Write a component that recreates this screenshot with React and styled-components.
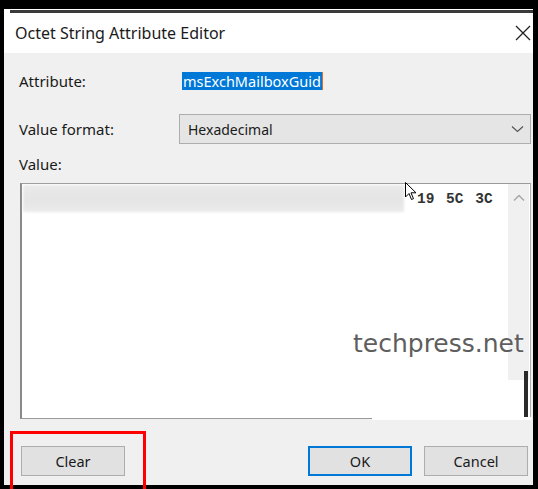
import React from "react";
import styled, { createGlobalStyle } from "styled-components";

const Global = createGlobalStyle`
  html, body {
    margin: 0;
    padding: 0;
    background: #000;
  }
  body {
    width: 538px;
    height: 489px;
    overflow: hidden;
    font-family: "Noto Sans", "Open Sans", sans-serif;
  }
`;

const Dialog = styled.div`
  position: relative;
  margin: 9px 0 0 4px;
  width: 529px;
  height: 476px;
  background: #f0f0f0;
  display: flex;
  flex-direction: column;
`;

const TitleBar = styled.div`
  background: #fff;
  height: 44px;
  display: flex;
  flex-direction: column;
`;

const TopRule = styled.div`
  margin: 1px 0 0 6px;
  height: 3px;
  background: #3a3a3a;
`;

const TitleRow = styled.div`
  flex: 1;
  display: flex;
  align-items: center;
  justify-content: space-between;
  padding: 0 2px 1px 11px;
`;

const Title = styled.span`
  font-size: 16px;
  color: #1a1a1a;
`;

const Body = styled.div`
  flex: 1;
  padding: 18px 2px 0 15px;
  display: flex;
  flex-direction: column;
`;

const Row = styled.div`
  display: grid;
  grid-template-columns: 160px 1fr;
  align-items: center;
  height: ${(p) => p.h}px;
  margin-top: ${(p) => p.mt || 0}px;
`;

const Label = styled.span`
  font-size: 15px;
  color: #1a1a1a;
`;

const Selected = styled.span`
  justify-self: start;
  margin-left: 3px;
  background: #0078d7;
  color: #fff;
  font-size: 14.5px;
  padding: 0 1px 0 1px;
  line-height: 18px;
  border-right: 1px solid #e07020;
`;

const Combo = styled.div`
  height: 30px;
  box-sizing: border-box;
  border: 1px solid #adadad;
  background: #e5e5e5;
  display: flex;
  align-items: center;
  justify-content: space-between;
  padding: 0 6px 0 8px;
  font-size: 14px;
  color: #1a1a1a;
`;

const ValueLabel = styled(Label)`
  margin-top: 11px;
  line-height: 18px;
`;

const TextBox = styled.div`
  position: relative;
  margin: 10px 0 0 1px;
  height: 236px;
  box-sizing: border-box;
  border: 1px solid #9a9a9a;
  border-left: 2px solid #8a8a8a;
  border-right-color: #b0b0b0;
  background: #fff;
  display: grid;
  grid-template-columns: 1fr 21px;
  padding-right: 1px;
`;

const Lines = styled.div`
  display: flex;
  align-items: flex-start;
  padding: 1px 0 0 1px;
`;

const Blurred = styled.div`
  width: 381px;
  height: 27px;
  background: linear-gradient(180deg, #e9e9e9 0%, #e4e4e4 55%, #eaeaea 100%);
  filter: blur(0.8px);
  opacity: 0.95;
`;

const Hex = styled.span`
  margin: 6px 0 0 13px;
  font-family: "Liberation Mono", monospace;
  font-weight: bold;
  font-size: 14.5px;
  color: #333;
  word-spacing: 3px;
`;

const Scroll = styled.div`
  display: flex;
  flex-direction: column;
  align-items: center;
  background: #f0f0f0;
  padding-top: 10px;
  height: 186px;
`;

const ScrollThumb = styled.div`
  position: absolute;
  right: 2px;
  top: 187px;
  width: 4px;
  height: 47px;
  background: #2a2a2a;
`;

const BottomCover = styled.div`
  position: absolute;
  left: 350px;
  right: -2px;
  bottom: -2px;
  height: 3px;
  background: #fff;
`;

const Buttons = styled.div`
  display: flex;
  align-items: center;
  margin-top: 27px;
  padding: 0 3px 0 2px;
  gap: 12px;
`;

const Spacer = styled.div`
  flex: 1;
`;

const Button = styled.button`
  width: ${(p) => p.w}px;
  height: 30px;
  box-sizing: border-box;
  background: #e1e1e1;
  border: ${(p) => (p.primary ? "2px solid #0078d7" : "1px solid #adadad")};
  font-family: "Noto Sans", "Open Sans", sans-serif;
  font-size: 14.5px;
  color: #1a1a1a;
  padding: 0;
`;

const Highlight = styled.div`
  position: absolute;
  left: 6px;
  top: 422px;
  width: 136px;
  height: 80px;
  box-sizing: border-box;
  border: 3px solid #f00;
`;

const Watermark = styled.div`
  position: absolute;
  left: 349px;
  top: 320px;
  font-family: "DejaVu Sans", sans-serif;
  font-size: 25px;
  color: #5e5e5e;
  text-shadow: 0 0 2px #fff;
`;

const Cursor = styled.svg`
  position: absolute;
  left: 401px;
  top: 173px;
`;

export default function App() {
  return (
    <>
      <Global />
      <Dialog>
        <TitleBar>
          <TopRule />
          <TitleRow>
            <Title>Octet String Attribute Editor</Title>
            <svg width="16" height="16" viewBox="0 0 16 16">
              <path d="M1 1 L15 15 M15 1 L1 15" stroke="#222" strokeWidth="1.3" />
            </svg>
          </TitleRow>
        </TitleBar>
        <Body>
          <Row h={18}>
            <Label>Attribute:</Label>
            <Selected>msExchMailboxGuid</Selected>
          </Row>
          <Row h={30} mt={25}>
            <Label>Value format:</Label>
            <Combo>
              <span>Hexadecimal</span>
              <svg width="13" height="8" viewBox="0 0 13 8">
                <path d="M1 1.5 L6.5 6.5 L12 1.5" fill="none" stroke="#555" strokeWidth="1.2" />
              </svg>
            </Combo>
          </Row>
          <ValueLabel>Value:</ValueLabel>
          <TextBox>
            <Lines>
              <Blurred />
              <Hex>19 5C 3C</Hex>
            </Lines>
            <Scroll>
              <svg width="12" height="8" viewBox="0 0 12 8">
                <path d="M1 6.5 L6 1.5 L11 6.5" fill="none" stroke="#a8a8a8" strokeWidth="1.5" />
              </svg>
            </Scroll>
            <ScrollThumb />
            <BottomCover />
          </TextBox>
          <Buttons>
            <Button w={104}>Clear</Button>
            <Spacer />
            <Button w={104} primary>OK</Button>
            <Button w={104}>Cancel</Button>
          </Buttons>
        </Body>
        <Watermark>techpress.net</Watermark>
        <Cursor width="12" height="19" viewBox="0 0 12 19">
          <path d="M0.5 0.5 L0.5 15 L4 11.5 L6.5 17.5 L8.5 16.7 L6 10.8 L11 10.8 Z" fill="#fff" stroke="#000" strokeWidth="1" />
        </Cursor>
        <Highlight />
      </Dialog>
    </>
  );
}
